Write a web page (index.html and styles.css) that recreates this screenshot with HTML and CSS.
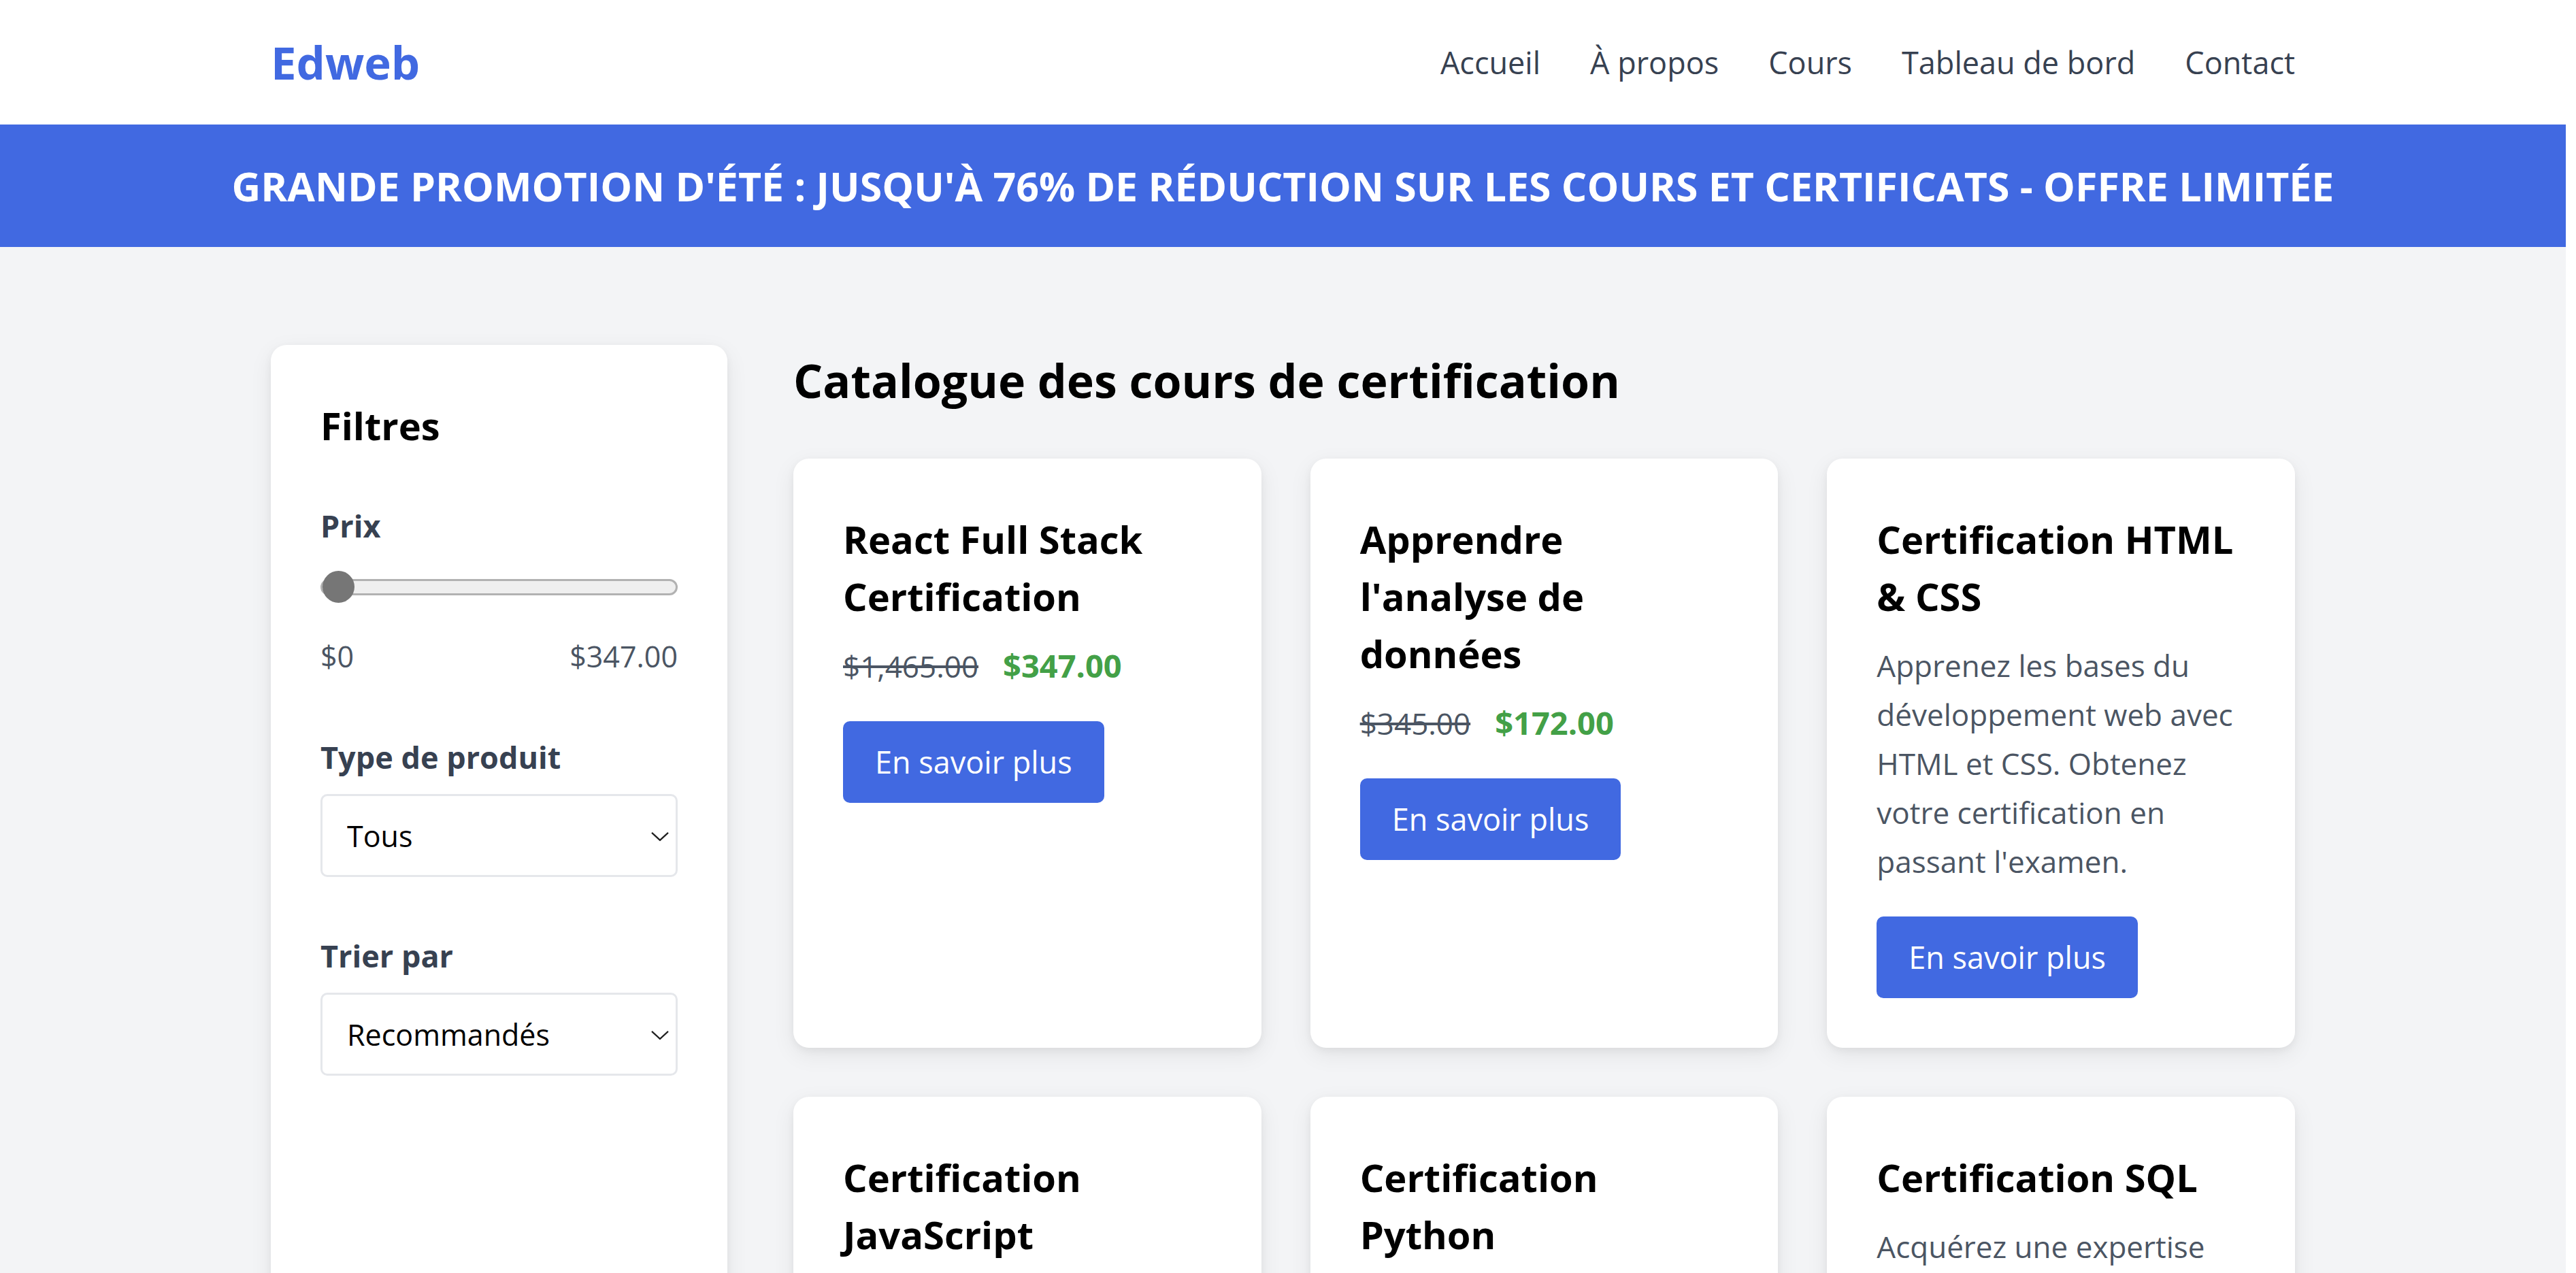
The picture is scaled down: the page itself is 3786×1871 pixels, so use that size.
FILE: index.html
```html
<!DOCTYPE html>
<html lang="fr">
<head>
<meta charset="utf-8">
<title>Edweb – Catalogue des cours de certification</title>
<link rel="stylesheet" href="styles.css">
</head>
<body>
<header class="site-header">
  <nav class="nav container">
    <a class="logo" href="#">Edweb</a>
    <ul class="nav-links">
      <li><a href="#">Accueil</a></li>
      <li><a href="#">À propos</a></li>
      <li><a href="#">Cours</a></li>
      <li><a href="#">Tableau de bord</a></li>
      <li><a href="#">Contact</a></li>
    </ul>
  </nav>
</header>

<div class="promo">GRANDE PROMOTION D'ÉTÉ : JUSQU'À 76% DE RÉDUCTION SUR LES COURS ET CERTIFICATS - OFFRE LIMITÉE</div>

<main class="page container">
  <aside class="filters">
    <h2 class="filters-title">Filtres</h2>

    <div class="filter-group">
      <label class="filter-label" for="price">Prix</label>
      <input type="range" id="price" class="range" min="0" max="347" value="0">
      <div class="range-values"><span>$0</span><span>$347.00</span></div>
    </div>

    <div class="filter-group">
      <label class="filter-label" for="type">Type de produit</label>
      <div class="select-wrap">
        <select id="type" class="select">
          <option>Tous</option>
          <option>Cours</option>
          <option>Certification</option>
        </select>
        <svg class="select-arrow" viewBox="0 0 26 14" aria-hidden="true"><polyline points="1,1.5 13,12.5 25,1.5" fill="none" stroke="#1f1f1f" stroke-width="2.2"/></svg>
      </div>
    </div>

    <div class="filter-group">
      <label class="filter-label" for="sort">Trier par</label>
      <div class="select-wrap">
        <select id="sort" class="select">
          <option>Recommandés</option>
          <option>Prix croissant</option>
          <option>Prix décroissant</option>
        </select>
        <svg class="select-arrow" viewBox="0 0 26 14" aria-hidden="true"><polyline points="1,1.5 13,12.5 25,1.5" fill="none" stroke="#1f1f1f" stroke-width="2.2"/></svg>
      </div>
    </div>
  </aside>

  <section class="catalog">
    <h1 class="catalog-title">Catalogue des cours de certification</h1>
    <div class="grid">
      <article class="card">
        <h3 class="card-title">React Full Stack Certification</h3>
        <p class="price"><span class="price-old">$1,465.00</span><span class="price-new">$347.00</span></p>
        <a class="btn" href="#">En savoir plus</a>
      </article>
      <article class="card">
        <h3 class="card-title">Apprendre l'analyse de données</h3>
        <p class="price"><span class="price-old">$345.00</span><span class="price-new">$172.00</span></p>
        <a class="btn" href="#">En savoir plus</a>
      </article>
      <article class="card">
        <h3 class="card-title">Certification HTML &amp; CSS</h3>
        <p class="card-text">Apprenez les bases du développement web avec HTML et CSS. Obtenez votre certification en passant l'examen.</p>
        <a class="btn" href="#">En savoir plus</a>
      </article>
      <article class="card">
        <h3 class="card-title">Certification JavaScript</h3>
        <p class="card-text">Maîtrisez JavaScript, du langage de base aux concepts avancés, et validez vos compétences.</p>
        <a class="btn" href="#">En savoir plus</a>
      </article>
      <article class="card">
        <h3 class="card-title">Certification Python</h3>
        <p class="card-text">Développez vos compétences en programmation Python et obtenez une certification reconnue.</p>
        <a class="btn" href="#">En savoir plus</a>
      </article>
      <article class="card">
        <h3 class="card-title">Certification SQL</h3>
        <p class="card-text">Acquérez une expertise approfondie des bases de données et des requêtes SQL.</p>
        <a class="btn" href="#">En savoir plus</a>
      </article>
    </div>
  </section>
</main>
</body>
</html>
```

FILE: styles.css
```css
* {
  box-sizing: border-box;
  margin: 0;
  padding: 0;
}

/* The white strip on the right stands for the reference's scrollbar gutter */
html {
  background: #fff;
}

body {
  margin-right: 15px;
  background: #f3f4f6;
  font-family: "Open Sans", "Noto Sans", "DejaVu Sans", sans-serif;
  color: #000;
}

a {
  color: inherit;
  text-decoration: none;
}

ul {
  list-style: none;
}

.container {
  max-width: 3091px;
  margin: 0 auto;
  padding: 0 58px;
}

/* Header */
.site-header {
  background: #fff;
}

.nav {
  height: 183px;
  display: flex;
  align-items: center;
  justify-content: space-between;
}

.logo {
  font-size: 67px;
  line-height: 91px;
  font-weight: 700;
  color: #4169e1;
}

.nav-links {
  display: flex;
  gap: 73px;
}

.nav-links a {
  font-size: 45px;
  line-height: 61px;
  color: #374151;
}

/* Promo banner */
.promo {
  height: 180px;
  display: flex;
  align-items: center;
  justify-content: center;
  background: #4169e1;
  color: #fff;
  font-size: 59px;
  font-weight: 700;
}

/* Page layout */
.page {
  display: flex;
  align-items: stretch;
  gap: 97px;
  padding-top: 144px;
  padding-bottom: 144px;
}

/* Sidebar filters */
.filters {
  flex: none;
  width: 671px;
  padding: 73px;
  background: #fff;
  border-radius: 23px;
  box-shadow: 0 10px 34px rgba(0, 0, 0, 0.07), 0 4px 12px rgba(0, 0, 0, 0.05);
}

.filters-title {
  font-size: 56px;
  line-height: 90px;
  font-weight: 700;
  margin-bottom: 69px;
}

.filter-group + .filter-group {
  margin-top: 82px;
}

.filter-label {
  display: block;
  font-size: 45px;
  line-height: 68px;
  font-weight: 700;
  color: #374151;
}

.range {
  display: block;
  width: 100%;
  height: 47px;
  margin-top: 32px;
  -webkit-appearance: none;
  appearance: none;
  background: transparent;
}

.range::-webkit-slider-runnable-track {
  height: 24px;
  background: #efefef;
  border: 3px solid #b2b2b2;
  border-radius: 12px;
}

.range::-webkit-slider-thumb {
  -webkit-appearance: none;
  appearance: none;
  width: 47px;
  height: 47px;
  margin-top: -14.5px;
  border: none;
  border-radius: 50%;
  background: #767676;
}

.range-values {
  display: flex;
  justify-content: space-between;
  margin-top: 47px;
  font-size: 43px;
  line-height: 64px;
  color: #4b5563;
}

.select-wrap {
  position: relative;
  margin-top: 20px;
}

.select {
  display: block;
  width: 100%;
  height: 122px;
  padding: 0 80px 0 36px;
  -webkit-appearance: none;
  appearance: none;
  background: #fff;
  border: 3px solid #e5e7eb;
  border-radius: 10px;
  font-family: inherit;
  font-size: 43px;
  color: #000;
}

.select-arrow {
  position: absolute;
  right: 13px;
  top: 50%;
  width: 26px;
  height: 14px;
  transform: translateY(-40%);
  pointer-events: none;
}

/* Catalog */
.catalog {
  flex: 1;
  min-width: 0;
}

.catalog-title {
  font-size: 68px;
  line-height: 87px;
  font-weight: 700;
  margin: 8px 0 72px;
}

.grid {
  display: grid;
  grid-template-columns: repeat(3, 1fr);
  gap: 72px;
}

.card {
  padding: 76px 73px 73px;
  background: #fff;
  border-radius: 23px;
  box-shadow: 0 10px 34px rgba(0, 0, 0, 0.07), 0 4px 12px rgba(0, 0, 0, 0.05);
}

.card-title {
  font-size: 56px;
  line-height: 84px;
  font-weight: 700;
}

.card-text {
  margin-top: 24px;
  font-size: 44px;
  line-height: 72px;
  color: #4b5563;
}

.price {
  display: flex;
  align-items: baseline;
  gap: 36px;
  margin-top: 24px;
  font-size: 44px;
  line-height: 72px;
}

.price-old {
  color: #4b5563;
  text-decoration: line-through;
}

.price-new {
  font-size: 47px;
  color: #43a047;
  font-weight: 700;
}

.btn {
  display: inline-block;
  margin-top: 45px;
  height: 120px;
  line-height: 120px;
  padding: 0 47px;
  background: #4169e1;
  color: #fff;
  font-size: 45px;
  border-radius: 10px;
}
```
